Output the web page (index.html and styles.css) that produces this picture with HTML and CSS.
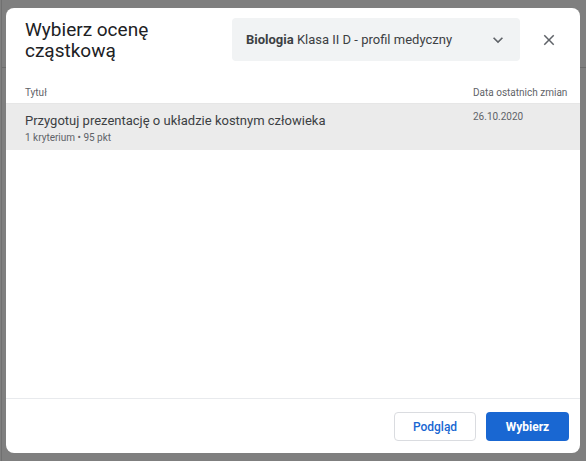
FILE: index.html
```html
<!DOCTYPE html>
<html lang="pl">
<head>
<meta charset="utf-8">
<title>Wybierz ocenę cząstkową</title>
<link rel="stylesheet" href="styles.css">
</head>
<body>
<div class="page">
  <div class="page-header"></div>
</div>
<div class="dialog" role="dialog">
  <div class="dlg-head">
    <div class="title-wrap">
      <h2 class="title">Wybierz ocenę cząstkową</h2>
    </div>
    <div class="select">
      <span class="select-text"><b>Biologia</b> Klasa II D - profil medyczny</span>
      <svg class="chev" viewBox="0 0 24 24" width="20" height="20"><path d="M7.41 8.59 12 13.17l4.59-4.58L18 10l-6 6-6-6z" fill="#5f6368"/></svg>
    </div>
    <button class="close" aria-label="Zamknij">
      <svg viewBox="0 0 24 24" width="18" height="18"><path d="M19 6.41 17.59 5 12 10.59 6.41 5 5 6.41 10.59 12 5 17.59 6.41 19 12 13.41 17.59 19 19 17.59 13.41 12z" fill="#5f6368"/></svg>
    </button>
  </div>
  <div class="table">
    <div class="th">Tytuł</div>
    <div class="th">Data ostatnich zmian</div>
    <div class="row">
      <div class="cell-main">
        <div class="row-title">Przygotuj prezentację o układzie kostnym człowieka</div>
        <div class="row-sub">1 kryterium • 95 pkt</div>
      </div>
      <div class="cell-date">26.10.2020</div>
    </div>
  </div>
  <div class="dlg-body"></div>
  <div class="dlg-foot">
    <button class="btn btn-outline">Podgląd</button>
    <button class="btn btn-primary">Wybierz</button>
  </div>
</div>
</body>
</html>
```

FILE: styles.css
```css
html, body {
  margin: 0;
  padding: 0;
}
body {
  width: 586px;
  height: 461px;
  background: #7f7f7f;
  font-family: Roboto, "Liberation Sans", Arial, sans-serif;
  overflow: hidden;
  position: relative;
}
.page {
  height: 461px;
  border-left: 1px solid #707070;
  margin-left: 1px;
}
.page-header {
  height: 67px;
  border-bottom: 1px solid #6c6c6c;
}
.dialog {
  position: absolute;
  left: 6px;
  top: 8px;
  width: 574px;
  height: 445px;
  background: #fff;
  border-radius: 8px;
  display: flex;
  flex-direction: column;
  overflow: hidden;
}
.dlg-head {
  display: flex;
  align-items: flex-start;
  padding: 10px 11px 0 19px;
  height: 62px;
}
.title-wrap {
  flex: 1;
}
.title {
  margin: 1px 0 0;
  width: 150px;
  font-size: 19px;
  line-height: 21px;
  font-weight: 400;
  color: #202124;
}
.select {
  width: 288px;
  height: 43px;
  box-sizing: border-box;
  background: #f1f3f4;
  border-radius: 4px;
  display: flex;
  align-items: center;
  padding: 0 12px 0 14px;
}
.select-text {
  flex: 1;
  font-size: 13px;
  color: #3c4043;
  white-space: nowrap;
}
.select-text b {
  font-weight: 700;
  color: #3c4043;
}
.chev {
  display: block;
}
.close {
  margin-left: 9px;
  width: 40px;
  height: 43px;
  border: 0;
  background: transparent;
  padding: 0;
  display: flex;
  align-items: center;
  justify-content: center;
}
.close svg {
  display: block;
}
.table {
  display: grid;
  grid-template-columns: 1fr 107px;
}
.th {
  height: 24px;
  box-sizing: border-box;
  padding-top: 6px;
  font-size: 10px;
  line-height: 13px;
  color: #5f6368;
  white-space: nowrap;
  border-bottom: 1px solid #e6e6e6;
}
.th:first-child {
  padding-left: 19px;
}
.row {
  grid-column: 1 / -1;
  display: grid;
  grid-template-columns: 1fr 107px;
  height: 46px;
  background: #ebebeb;
}
.cell-main {
  padding: 8px 0 0 19px;
}
.row-title {
  font-size: 13px;
  line-height: 18px;
  color: #3c4043;
}
.row-sub {
  margin-top: 1px;
  font-size: 10px;
  line-height: 14px;
  color: #5f6368;
}
.cell-date {
  padding-top: 6px;
  font-size: 10px;
  line-height: 14px;
  color: #5f6368;
}
.dlg-body {
  flex: 1;
}
.dlg-foot {
  border-top: 1px solid #e8eaed;
  display: flex;
  justify-content: flex-end;
  align-items: flex-start;
  gap: 10px;
  padding: 13px 11px 0 0;
  box-sizing: border-box;
  height: 55px;
}
.btn {
  height: 29px;
  border-radius: 4px;
  font-family: Roboto, "Liberation Sans", Arial, sans-serif;
  font-size: 12px;
  font-weight: 500;
  padding: 0;
  cursor: pointer;
}
.btn-outline {
  width: 82px;
  background: #fff;
  color: #1967d2;
  border: 1px solid #dadce0;
}
.btn-primary {
  width: 83px;
  background: #1967d2;
  color: #fff;
  border: 0;
  font-weight: 700;
}
```
